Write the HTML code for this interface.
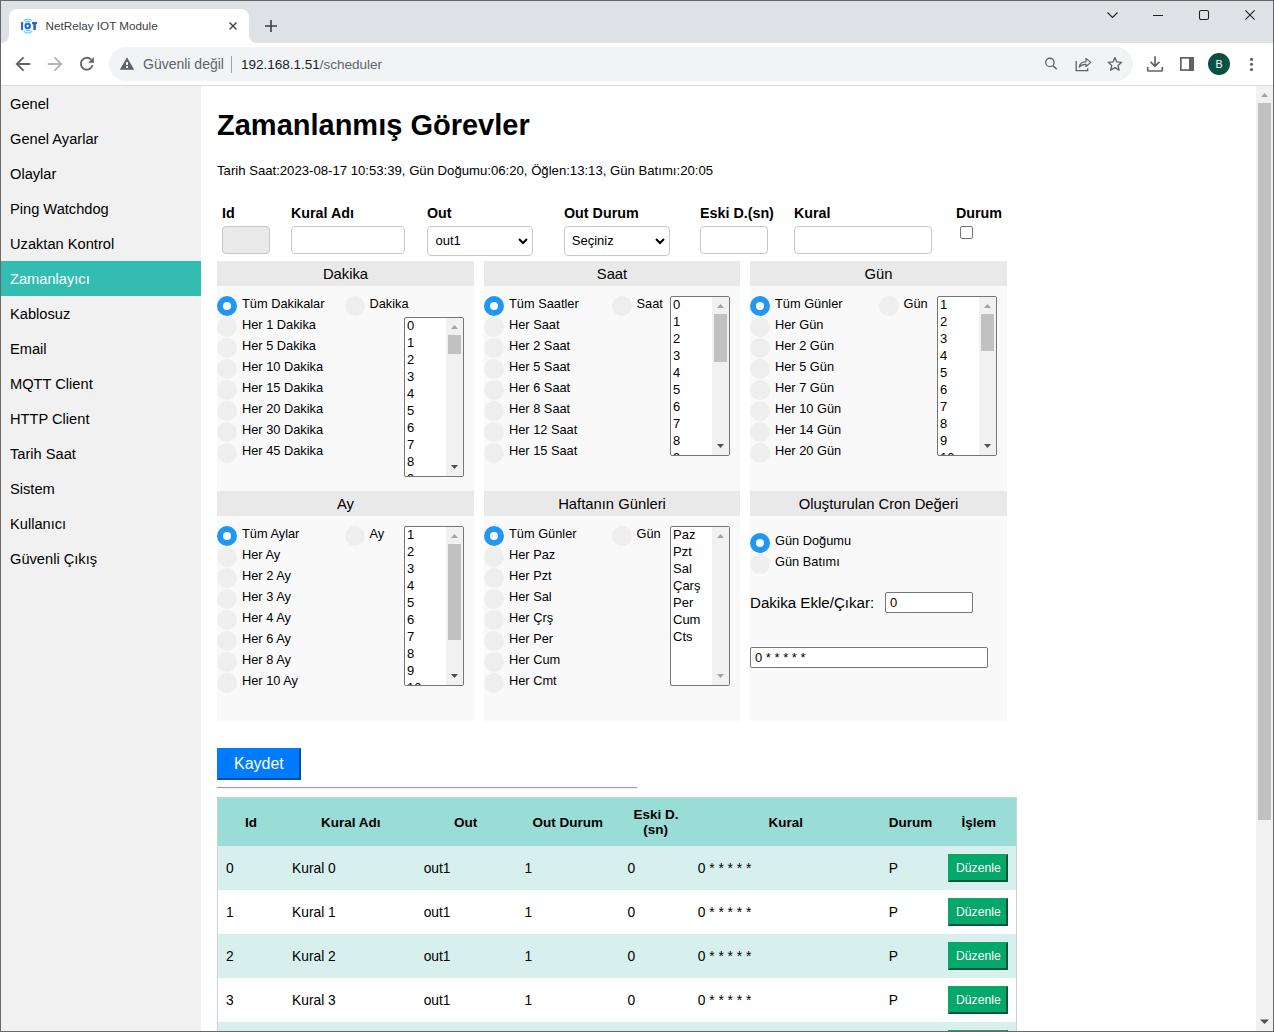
<!DOCTYPE html><html><head><meta charset="utf-8"><title>NetRelay IOT Module</title><style>
html,body{margin:0;padding:0;width:1274px;height:1032px;overflow:hidden;background:#fff;}
body{position:relative;font-family:"Liberation Sans", sans-serif;}
.t{position:absolute;white-space:nowrap;line-height:1;}
.b{position:absolute;box-sizing:border-box;}
.rad{position:absolute;width:20px;height:20px;border-radius:50%;background:#eee;}
.rad.on{background:#2196f3;}
.rad.on:after{content:"";position:absolute;left:6px;top:6px;width:8px;height:8px;border-radius:50%;background:#fff;}
svg{position:absolute;overflow:visible;}
</style></head><body>
<div class="b" style="left:0px;top:0px;width:1274px;height:43px;background:#dee1e6;"></div>
<div class="b" style="left:0px;top:43px;width:1274px;height:43px;background:#fff;"></div>
<div class="b" style="left:0px;top:85px;width:1274px;height:1px;background:#dadce0;"></div>
<div class="b" style="left:9px;top:9px;width:240px;height:34px;background:#fff;border-radius:8px 8px 0 0;"></div>
<svg style="left:1px;top:35px" width="8" height="8"><path d="M0 8 A8 8 0 0 0 8 0 L8 8 Z" fill="#fff"/></svg>
<svg style="left:249px;top:35px" width="8" height="8"><path d="M8 8 A8 8 0 0 1 0 0 L0 8 Z" fill="#fff"/></svg>
<svg style="left:20px;top:17px" width="18" height="18" viewBox="0 0 18 18"><rect x="1" y="5" width="2.1" height="7.9" rx="0.5" fill="#2563eb"/><circle cx="7.7" cy="9" r="2.2" fill="none" stroke="#2a5fe0" stroke-width="2.1"/><rect x="12" y="5" width="5" height="2.3" rx="0.5" fill="#2a5fe0"/><rect x="13.3" y="5" width="2.6" height="7.9" rx="0.5" fill="#2a5fe0"/><path d="M3.8 3.7 Q7.7 0.3 11.8 3.7 M5.2 5.1 Q7.7 3.6 10.4 5.1 M3.8 14.3 Q7.7 17.7 11.8 14.3 M5.2 12.9 Q7.7 14.4 10.4 12.9" fill="none" stroke="#38d3e3" stroke-width="1.1"/></svg>
<div class="t" style="left:45.5px;top:20.10px;font-size:11.7px;color:#3c4043;font-weight:normal;">NetRelay IOT Module</div>
<svg style="left:229px;top:22px" width="8" height="8"><path d="M0.5 0.5 L7.5 7.5 M7.5 0.5 L0.5 7.5" stroke="#3c4043" stroke-width="1.4"/></svg>
<svg style="left:265px;top:20px" width="12" height="12"><path d="M6 0 V12 M0 6 H12" stroke="#3c4043" stroke-width="1.6"/></svg>
<svg style="left:1107px;top:12px" width="11" height="7"><path d="M0.5 0.5 L5.5 5.5 L10.5 0.5" fill="none" stroke="#1f1f1f" stroke-width="1.1"/></svg>
<div class="b" style="left:1153px;top:15px;width:10px;height:1px;background:#1f1f1f;"></div>
<svg style="left:1199px;top:10px" width="10" height="10"><rect x="0.5" y="0.5" width="9" height="9" rx="1.6" fill="none" stroke="#1f1f1f" stroke-width="1.05"/></svg>
<svg style="left:1245px;top:10px" width="10" height="10"><path d="M0.4 0.4 L9.6 9.6 M9.6 0.4 L0.4 9.6" stroke="#1f1f1f" stroke-width="1.1"/></svg>
<svg style="left:15px;top:56px" width="16" height="16" viewBox="0 0 16 16"><path d="M14.5 8 H2.5 M8 1.8 L1.8 8 L8 14.2" fill="none" stroke="#5f6368" stroke-width="1.9" stroke-linecap="round"/></svg>
<svg style="left:47px;top:56px" width="16" height="16" viewBox="0 0 16 16"><path d="M1.5 8 H13.5 M8 1.8 L14.2 8 L8 14.2" fill="none" stroke="#b4b6b9" stroke-width="1.9" stroke-linecap="round"/></svg>
<svg style="left:79px;top:56px" width="16" height="16" viewBox="0 0 16 16"><path d="M13.47 9.33 A5.9 5.9 0 1 1 11.97 3.53" fill="none" stroke="#5f6368" stroke-width="1.9"/><path d="M14.9 1.1 L14.9 6.8 L9.1 6.8 Z" fill="#5f6368"/></svg>
<div class="b" style="left:109px;top:47px;width:1024px;height:34px;background:#f1f3f4;border-radius:17px;"></div>
<svg style="left:119px;top:56px" width="16" height="15" viewBox="0 0 16 15"><path d="M8 1.2 L15.2 13.8 H0.8 Z" fill="#5f6368"/><rect x="7" y="6.2" width="2" height="2.7" fill="#fff"/><rect x="7" y="10.1" width="2" height="1.9" fill="#fff"/></svg>
<div class="t" style="left:143px;top:57.15px;font-size:14px;color:#5f6368;font-weight:normal;">Güvenli değil</div>
<div class="b" style="left:231px;top:56px;width:1px;height:17px;background:#9aa0a6;"></div>
<div class="t" style="left:241px;top:57.57px;font-size:13.5px;color:#202124;font-weight:normal;">192.168.1.51<span style="color:#5f6368">/scheduler</span></div>
<svg style="left:1044px;top:57px" width="14" height="14" viewBox="0 0 14 14"><circle cx="5.9" cy="5.4" r="4.2" fill="none" stroke="#5f6368" stroke-width="1.35"/><path d="M9 8.6 L12.7 12.3" stroke="#5f6368" stroke-width="1.5"/></svg>
<svg style="left:1075px;top:56px" width="17" height="16" viewBox="0 0 17 16"><path d="M1.2 5 V14.7 H12.7 V12.3" fill="none" stroke="#5f6368" stroke-width="1.3"/><path d="M4.2 11.2 C4.6 7.6 7.6 5.6 11 5.8 V2.4 L15.8 6.4 L11 10.5 V8.3 C8 8.2 5.6 9.2 4.2 11.2 Z" fill="none" stroke="#5f6368" stroke-width="1.2" stroke-linejoin="round"/></svg>
<svg style="left:1106px;top:56px" width="17" height="16" viewBox="0 0 17 16"><path d="M8.9 1.6 L10.8 5.9 L15.6 6.3 L12 9.4 L13.1 14.2 L8.9 11.7 L4.7 14.2 L5.8 9.4 L2.2 6.3 L7 5.9 Z" fill="none" stroke="#5f6368" stroke-width="1.35" stroke-linejoin="round"/></svg>
<svg style="left:1146px;top:55px" width="18" height="17" viewBox="0 0 18 17"><path d="M9 1.2 V11.6 M4.6 6.9 L9 11.4 L13.4 6.9" fill="none" stroke="#5f6368" stroke-width="1.7"/><path d="M1.7 12 V15 Q1.7 16 2.7 16 H15.3 Q16.3 16 16.3 15 V12" fill="none" stroke="#5f6368" stroke-width="1.7"/></svg>
<svg style="left:1179px;top:56px" width="16" height="16" viewBox="0 0 16 16"><rect x="1.85" y="1.85" width="12.3" height="12.2" fill="none" stroke="#5f6368" stroke-width="1.7"/><rect x="10" y="1" width="5" height="13.9" fill="#5f6368"/></svg>
<div class="b" style="left:1208px;top:53px;width:22px;height:22px;border-radius:50%;background:#0b5142;"></div>
<div class="t" style="left:1215.6px;top:58.86px;font-size:10.8px;color:#fff;font-weight:normal;">B</div>
<svg style="left:1249px;top:57px" width="5" height="15"><circle cx="2.5" cy="2.4" r="1.55" fill="#5f6368"/><circle cx="2.5" cy="7.3" r="1.55" fill="#5f6368"/><circle cx="2.5" cy="12.6" r="1.55" fill="#5f6368"/></svg>
<div class="b" style="left:1px;top:86px;width:200px;height:946px;background:#f1f1f1;"></div>
<div class="t" style="left:10px;top:97.00px;font-size:14.65px;color:#000;font-weight:normal;">Genel</div>
<div class="t" style="left:10px;top:132.00px;font-size:14.65px;color:#000;font-weight:normal;">Genel Ayarlar</div>
<div class="t" style="left:10px;top:167.00px;font-size:14.65px;color:#000;font-weight:normal;">Olaylar</div>
<div class="t" style="left:10px;top:202.00px;font-size:14.65px;color:#000;font-weight:normal;">Ping Watchdog</div>
<div class="t" style="left:10px;top:237.00px;font-size:14.65px;color:#000;font-weight:normal;">Uzaktan Kontrol</div>
<div class="b" style="left:1px;top:261px;width:200px;height:35px;background:#33bdb2;"></div>
<div class="t" style="left:10px;top:272.00px;font-size:14.65px;color:#fff;font-weight:normal;">Zamanlayıcı</div>
<div class="t" style="left:10px;top:307.00px;font-size:14.65px;color:#000;font-weight:normal;">Kablosuz</div>
<div class="t" style="left:10px;top:342.00px;font-size:14.65px;color:#000;font-weight:normal;">Email</div>
<div class="t" style="left:10px;top:377.00px;font-size:14.65px;color:#000;font-weight:normal;">MQTT Client</div>
<div class="t" style="left:10px;top:412.00px;font-size:14.65px;color:#000;font-weight:normal;">HTTP Client</div>
<div class="t" style="left:10px;top:447.00px;font-size:14.65px;color:#000;font-weight:normal;">Tarih Saat</div>
<div class="t" style="left:10px;top:482.00px;font-size:14.65px;color:#000;font-weight:normal;">Sistem</div>
<div class="t" style="left:10px;top:517.00px;font-size:14.65px;color:#000;font-weight:normal;">Kullanıcı</div>
<div class="t" style="left:10px;top:552.00px;font-size:14.65px;color:#000;font-weight:normal;">Güvenli Çıkış</div>
<div class="b" style="left:1256px;top:86px;width:17px;height:946px;background:#f1f1f1;"></div>
<svg style="left:1261px;top:93px" width="7" height="4"><path d="M0 4 L3.5 0 L7 4 Z" fill="#a3a3a3"/></svg>
<div class="b" style="left:1258px;top:103px;width:13px;height:717px;background:#c1c1c1;"></div>
<svg style="left:1260px;top:1019px" width="9" height="6"><path d="M0 0.5 L4.5 5 L9 0.5 Z" fill="#505050"/></svg>
<div class="t" style="left:217px;top:110.75px;font-size:29px;color:#000;font-weight:bold;">Zamanlanmış Görevler</div>
<div class="t" style="left:217px;top:163.87px;font-size:13.15px;color:#000;font-weight:normal;">Tarih Saat:2023-08-17 10:53:39, Gün Doğumu:06:20, Öğlen:13:13, Gün Batımı:20:05</div>
<div class="t" style="left:222px;top:205.60px;font-size:14.3px;color:#000;font-weight:bold;">Id</div>
<div class="t" style="left:291px;top:205.60px;font-size:14.3px;color:#000;font-weight:bold;">Kural Adı</div>
<div class="t" style="left:427px;top:205.60px;font-size:14.3px;color:#000;font-weight:bold;">Out</div>
<div class="t" style="left:564px;top:205.60px;font-size:14.3px;color:#000;font-weight:bold;">Out Durum</div>
<div class="t" style="left:700px;top:205.60px;font-size:14.3px;color:#000;font-weight:bold;">Eski D.(sn)</div>
<div class="t" style="left:794px;top:205.60px;font-size:14.3px;color:#000;font-weight:bold;">Kural</div>
<div class="t" style="left:956px;top:205.60px;font-size:14.3px;color:#000;font-weight:bold;">Durum</div>
<div class="b" style="left:222px;top:226px;width:48px;height:28px;border:1px solid #c8c8c8;border-radius:4px;background:#e9e9e9;"></div>
<div class="b" style="left:291px;top:226px;width:114px;height:28px;border:1px solid #c8c8c8;border-radius:4px;background:#fff;"></div>
<div class="b" style="left:700px;top:226px;width:68px;height:28px;border:1px solid #c8c8c8;border-radius:4px;background:#fff;"></div>
<div class="b" style="left:794px;top:226px;width:138px;height:28px;border:1px solid #c8c8c8;border-radius:4px;background:#fff;"></div>
<div class="b" style="left:427px;top:226px;width:106px;height:30px;border:1px solid #c8c8c8;border-radius:4px;background:#fff;"></div>
<div class="b" style="left:564px;top:226px;width:106px;height:30px;border:1px solid #c8c8c8;border-radius:4px;background:#fff;"></div>
<div class="t" style="left:435.5px;top:233.60px;font-size:13px;color:#000;font-weight:normal;">out1</div>
<div class="t" style="left:571.8px;top:233.60px;font-size:13px;color:#000;font-weight:normal;">Seçiniz</div>
<svg style="left:518px;top:238px" width="10" height="7"><path d="M1 1 L5 5 L9 1" fill="none" stroke="#000" stroke-width="2"/></svg>
<svg style="left:655px;top:238px" width="10" height="7"><path d="M1 1 L5 5 L9 1" fill="none" stroke="#000" stroke-width="2"/></svg>
<div class="b" style="left:960px;top:226px;width:13px;height:13px;border:1px solid #767676;border-radius:2px;background:#fff;"></div>
<div class="b" style="left:217px;top:261px;width:257px;height:25px;background:#e9e9e9;"></div>
<div class="b" style="left:217px;top:286px;width:257px;height:205px;background:#f9f9f9;"></div>
<div class="t" style="left:217px;width:257px;text-align:center;top:266.67px;font-size:14.8px;">Dakika</div>
<div class="b" style="left:484px;top:261px;width:256px;height:25px;background:#e9e9e9;"></div>
<div class="b" style="left:484px;top:286px;width:256px;height:205px;background:#f9f9f9;"></div>
<div class="t" style="left:484px;width:256px;text-align:center;top:266.67px;font-size:14.8px;">Saat</div>
<div class="b" style="left:750px;top:261px;width:257px;height:25px;background:#e9e9e9;"></div>
<div class="b" style="left:750px;top:286px;width:257px;height:205px;background:#f9f9f9;"></div>
<div class="t" style="left:750px;width:257px;text-align:center;top:266.67px;font-size:14.8px;">Gün</div>
<div class="b" style="left:217px;top:491px;width:257px;height:25px;background:#e9e9e9;"></div>
<div class="b" style="left:217px;top:516px;width:257px;height:205px;background:#f9f9f9;"></div>
<div class="t" style="left:217px;width:257px;text-align:center;top:496.67px;font-size:14.8px;">Ay</div>
<div class="b" style="left:484px;top:491px;width:256px;height:25px;background:#e9e9e9;"></div>
<div class="b" style="left:484px;top:516px;width:256px;height:205px;background:#f9f9f9;"></div>
<div class="t" style="left:484px;width:256px;text-align:center;top:496.67px;font-size:14.8px;">Haftanın Günleri</div>
<div class="b" style="left:750px;top:491px;width:257px;height:25px;background:#e9e9e9;"></div>
<div class="b" style="left:750px;top:516px;width:257px;height:205px;background:#f9f9f9;"></div>
<div class="t" style="left:750px;width:257px;text-align:center;top:496.67px;font-size:14.8px;">Oluşturulan Cron Değeri</div>
<div class="rad on" style="left:217px;top:296px"></div>
<div class="t" style="left:242px;top:298.06px;font-size:12.8px;color:#000;font-weight:normal;">Tüm Dakikalar</div>
<div class="rad" style="left:217px;top:317px"></div>
<div class="t" style="left:242px;top:319.06px;font-size:12.8px;color:#000;font-weight:normal;">Her 1 Dakika</div>
<div class="rad" style="left:217px;top:338px"></div>
<div class="t" style="left:242px;top:340.06px;font-size:12.8px;color:#000;font-weight:normal;">Her 5 Dakika</div>
<div class="rad" style="left:217px;top:359px"></div>
<div class="t" style="left:242px;top:361.06px;font-size:12.8px;color:#000;font-weight:normal;">Her 10 Dakika</div>
<div class="rad" style="left:217px;top:380px"></div>
<div class="t" style="left:242px;top:382.06px;font-size:12.8px;color:#000;font-weight:normal;">Her 15 Dakika</div>
<div class="rad" style="left:217px;top:401px"></div>
<div class="t" style="left:242px;top:403.06px;font-size:12.8px;color:#000;font-weight:normal;">Her 20 Dakika</div>
<div class="rad" style="left:217px;top:422px"></div>
<div class="t" style="left:242px;top:424.06px;font-size:12.8px;color:#000;font-weight:normal;">Her 30 Dakika</div>
<div class="rad" style="left:217px;top:443px"></div>
<div class="t" style="left:242px;top:445.06px;font-size:12.8px;color:#000;font-weight:normal;">Her 45 Dakika</div>
<div class="rad" style="left:345px;top:296px"></div>
<div class="t" style="left:369.5px;top:298.06px;font-size:12.8px;color:#000;font-weight:normal;">Dakika</div>
<div class="rad on" style="left:484px;top:296px"></div>
<div class="t" style="left:509px;top:298.06px;font-size:12.8px;color:#000;font-weight:normal;">Tüm Saatler</div>
<div class="rad" style="left:484px;top:317px"></div>
<div class="t" style="left:509px;top:319.06px;font-size:12.8px;color:#000;font-weight:normal;">Her Saat</div>
<div class="rad" style="left:484px;top:338px"></div>
<div class="t" style="left:509px;top:340.06px;font-size:12.8px;color:#000;font-weight:normal;">Her 2 Saat</div>
<div class="rad" style="left:484px;top:359px"></div>
<div class="t" style="left:509px;top:361.06px;font-size:12.8px;color:#000;font-weight:normal;">Her 5 Saat</div>
<div class="rad" style="left:484px;top:380px"></div>
<div class="t" style="left:509px;top:382.06px;font-size:12.8px;color:#000;font-weight:normal;">Her 6 Saat</div>
<div class="rad" style="left:484px;top:401px"></div>
<div class="t" style="left:509px;top:403.06px;font-size:12.8px;color:#000;font-weight:normal;">Her 8 Saat</div>
<div class="rad" style="left:484px;top:422px"></div>
<div class="t" style="left:509px;top:424.06px;font-size:12.8px;color:#000;font-weight:normal;">Her 12 Saat</div>
<div class="rad" style="left:484px;top:443px"></div>
<div class="t" style="left:509px;top:445.06px;font-size:12.8px;color:#000;font-weight:normal;">Her 15 Saat</div>
<div class="rad" style="left:612px;top:296px"></div>
<div class="t" style="left:636.5px;top:298.06px;font-size:12.8px;color:#000;font-weight:normal;">Saat</div>
<div class="rad on" style="left:750px;top:296px"></div>
<div class="t" style="left:775px;top:298.06px;font-size:12.8px;color:#000;font-weight:normal;">Tüm Günler</div>
<div class="rad" style="left:750px;top:317px"></div>
<div class="t" style="left:775px;top:319.06px;font-size:12.8px;color:#000;font-weight:normal;">Her Gün</div>
<div class="rad" style="left:750px;top:338px"></div>
<div class="t" style="left:775px;top:340.06px;font-size:12.8px;color:#000;font-weight:normal;">Her 2 Gün</div>
<div class="rad" style="left:750px;top:359px"></div>
<div class="t" style="left:775px;top:361.06px;font-size:12.8px;color:#000;font-weight:normal;">Her 5 Gün</div>
<div class="rad" style="left:750px;top:380px"></div>
<div class="t" style="left:775px;top:382.06px;font-size:12.8px;color:#000;font-weight:normal;">Her 7 Gün</div>
<div class="rad" style="left:750px;top:401px"></div>
<div class="t" style="left:775px;top:403.06px;font-size:12.8px;color:#000;font-weight:normal;">Her 10 Gün</div>
<div class="rad" style="left:750px;top:422px"></div>
<div class="t" style="left:775px;top:424.06px;font-size:12.8px;color:#000;font-weight:normal;">Her 14 Gün</div>
<div class="rad" style="left:750px;top:443px"></div>
<div class="t" style="left:775px;top:445.06px;font-size:12.8px;color:#000;font-weight:normal;">Her 20 Gün</div>
<div class="rad" style="left:879px;top:296px"></div>
<div class="t" style="left:903.5px;top:298.06px;font-size:12.8px;color:#000;font-weight:normal;">Gün</div>
<div class="rad on" style="left:217px;top:526px"></div>
<div class="t" style="left:242px;top:528.06px;font-size:12.8px;color:#000;font-weight:normal;">Tüm Aylar</div>
<div class="rad" style="left:217px;top:547px"></div>
<div class="t" style="left:242px;top:549.06px;font-size:12.8px;color:#000;font-weight:normal;">Her Ay</div>
<div class="rad" style="left:217px;top:568px"></div>
<div class="t" style="left:242px;top:570.06px;font-size:12.8px;color:#000;font-weight:normal;">Her 2 Ay</div>
<div class="rad" style="left:217px;top:589px"></div>
<div class="t" style="left:242px;top:591.06px;font-size:12.8px;color:#000;font-weight:normal;">Her 3 Ay</div>
<div class="rad" style="left:217px;top:610px"></div>
<div class="t" style="left:242px;top:612.06px;font-size:12.8px;color:#000;font-weight:normal;">Her 4 Ay</div>
<div class="rad" style="left:217px;top:631px"></div>
<div class="t" style="left:242px;top:633.06px;font-size:12.8px;color:#000;font-weight:normal;">Her 6 Ay</div>
<div class="rad" style="left:217px;top:652px"></div>
<div class="t" style="left:242px;top:654.06px;font-size:12.8px;color:#000;font-weight:normal;">Her 8 Ay</div>
<div class="rad" style="left:217px;top:673px"></div>
<div class="t" style="left:242px;top:675.06px;font-size:12.8px;color:#000;font-weight:normal;">Her 10 Ay</div>
<div class="rad" style="left:345px;top:526px"></div>
<div class="t" style="left:369.5px;top:528.06px;font-size:12.8px;color:#000;font-weight:normal;">Ay</div>
<div class="rad on" style="left:484px;top:526px"></div>
<div class="t" style="left:509px;top:528.06px;font-size:12.8px;color:#000;font-weight:normal;">Tüm Günler</div>
<div class="rad" style="left:484px;top:547px"></div>
<div class="t" style="left:509px;top:549.06px;font-size:12.8px;color:#000;font-weight:normal;">Her Paz</div>
<div class="rad" style="left:484px;top:568px"></div>
<div class="t" style="left:509px;top:570.06px;font-size:12.8px;color:#000;font-weight:normal;">Her Pzt</div>
<div class="rad" style="left:484px;top:589px"></div>
<div class="t" style="left:509px;top:591.06px;font-size:12.8px;color:#000;font-weight:normal;">Her Sal</div>
<div class="rad" style="left:484px;top:610px"></div>
<div class="t" style="left:509px;top:612.06px;font-size:12.8px;color:#000;font-weight:normal;">Her Çrş</div>
<div class="rad" style="left:484px;top:631px"></div>
<div class="t" style="left:509px;top:633.06px;font-size:12.8px;color:#000;font-weight:normal;">Her Per</div>
<div class="rad" style="left:484px;top:652px"></div>
<div class="t" style="left:509px;top:654.06px;font-size:12.8px;color:#000;font-weight:normal;">Her Cum</div>
<div class="rad" style="left:484px;top:673px"></div>
<div class="t" style="left:509px;top:675.06px;font-size:12.8px;color:#000;font-weight:normal;">Her Cmt</div>
<div class="rad" style="left:612px;top:526px"></div>
<div class="t" style="left:636.5px;top:528.06px;font-size:12.8px;color:#000;font-weight:normal;">Gün</div>
<div class="rad on" style="left:750px;top:533px"></div>
<div class="t" style="left:775px;top:535.06px;font-size:12.8px;color:#000;font-weight:normal;">Gün Doğumu</div>
<div class="rad" style="left:750px;top:554px"></div>
<div class="t" style="left:775px;top:556.06px;font-size:12.8px;color:#000;font-weight:normal;">Gün Batımı</div>
<div class="b" style="left:404px;top:317px;width:60px;height:160px;border:1px solid #767676;border-radius:2px;background:#fff;overflow:hidden;">
<div class="t" style="left:2px;top:-1.20px;font-size:13px;line-height:17px;">0</div>
<div class="t" style="left:2px;top:15.80px;font-size:13px;line-height:17px;">1</div>
<div class="t" style="left:2px;top:32.80px;font-size:13px;line-height:17px;">2</div>
<div class="t" style="left:2px;top:49.80px;font-size:13px;line-height:17px;">3</div>
<div class="t" style="left:2px;top:66.80px;font-size:13px;line-height:17px;">4</div>
<div class="t" style="left:2px;top:83.80px;font-size:13px;line-height:17px;">5</div>
<div class="t" style="left:2px;top:100.80px;font-size:13px;line-height:17px;">6</div>
<div class="t" style="left:2px;top:117.80px;font-size:13px;line-height:17px;">7</div>
<div class="t" style="left:2px;top:134.80px;font-size:13px;line-height:17px;">8</div>
<div class="t" style="left:2px;top:151.80px;font-size:13px;line-height:17px;">9</div>
<div class="t" style="left:2px;top:168.80px;font-size:13px;line-height:17px;">10</div>
<div class="b" style="left:41px;top:0;width:17px;height:158px;background:#f1f1f1;"></div>
<svg style="left:46px;top:6.5px" width="7" height="4"><path d="M0 4 L3.5 0 L7 4 Z" fill="#a3a3a3"/></svg>
<svg style="left:46px;top:146.7px" width="7" height="4"><path d="M0 0 L3.5 4 L7 0 Z" fill="#505050"/></svg>
<div class="b" style="left:43px;top:17px;width:13px;height:19px;background:#c1c1c1;"></div>
</div>
<div class="b" style="left:670px;top:296px;width:60px;height:160px;border:1px solid #767676;border-radius:2px;background:#fff;overflow:hidden;">
<div class="t" style="left:2px;top:-1.20px;font-size:13px;line-height:17px;">0</div>
<div class="t" style="left:2px;top:15.80px;font-size:13px;line-height:17px;">1</div>
<div class="t" style="left:2px;top:32.80px;font-size:13px;line-height:17px;">2</div>
<div class="t" style="left:2px;top:49.80px;font-size:13px;line-height:17px;">3</div>
<div class="t" style="left:2px;top:66.80px;font-size:13px;line-height:17px;">4</div>
<div class="t" style="left:2px;top:83.80px;font-size:13px;line-height:17px;">5</div>
<div class="t" style="left:2px;top:100.80px;font-size:13px;line-height:17px;">6</div>
<div class="t" style="left:2px;top:117.80px;font-size:13px;line-height:17px;">7</div>
<div class="t" style="left:2px;top:134.80px;font-size:13px;line-height:17px;">8</div>
<div class="t" style="left:2px;top:151.80px;font-size:13px;line-height:17px;">9</div>
<div class="t" style="left:2px;top:168.80px;font-size:13px;line-height:17px;">10</div>
<div class="b" style="left:41px;top:0;width:17px;height:158px;background:#f1f1f1;"></div>
<svg style="left:46px;top:6.5px" width="7" height="4"><path d="M0 4 L3.5 0 L7 4 Z" fill="#a3a3a3"/></svg>
<svg style="left:46px;top:146.7px" width="7" height="4"><path d="M0 0 L3.5 4 L7 0 Z" fill="#505050"/></svg>
<div class="b" style="left:43px;top:17px;width:13px;height:48px;background:#c1c1c1;"></div>
</div>
<div class="b" style="left:937px;top:296px;width:60px;height:160px;border:1px solid #767676;border-radius:2px;background:#fff;overflow:hidden;">
<div class="t" style="left:2px;top:-1.20px;font-size:13px;line-height:17px;">1</div>
<div class="t" style="left:2px;top:15.80px;font-size:13px;line-height:17px;">2</div>
<div class="t" style="left:2px;top:32.80px;font-size:13px;line-height:17px;">3</div>
<div class="t" style="left:2px;top:49.80px;font-size:13px;line-height:17px;">4</div>
<div class="t" style="left:2px;top:66.80px;font-size:13px;line-height:17px;">5</div>
<div class="t" style="left:2px;top:83.80px;font-size:13px;line-height:17px;">6</div>
<div class="t" style="left:2px;top:100.80px;font-size:13px;line-height:17px;">7</div>
<div class="t" style="left:2px;top:117.80px;font-size:13px;line-height:17px;">8</div>
<div class="t" style="left:2px;top:134.80px;font-size:13px;line-height:17px;">9</div>
<div class="t" style="left:2px;top:151.80px;font-size:13px;line-height:17px;">10</div>
<div class="t" style="left:2px;top:168.80px;font-size:13px;line-height:17px;">11</div>
<div class="b" style="left:41px;top:0;width:17px;height:158px;background:#f1f1f1;"></div>
<svg style="left:46px;top:6.5px" width="7" height="4"><path d="M0 4 L3.5 0 L7 4 Z" fill="#a3a3a3"/></svg>
<svg style="left:46px;top:146.7px" width="7" height="4"><path d="M0 0 L3.5 4 L7 0 Z" fill="#505050"/></svg>
<div class="b" style="left:43px;top:17px;width:13px;height:37px;background:#c1c1c1;"></div>
</div>
<div class="b" style="left:404px;top:526px;width:60px;height:160px;border:1px solid #767676;border-radius:2px;background:#fff;overflow:hidden;">
<div class="t" style="left:2px;top:-1.20px;font-size:13px;line-height:17px;">1</div>
<div class="t" style="left:2px;top:15.80px;font-size:13px;line-height:17px;">2</div>
<div class="t" style="left:2px;top:32.80px;font-size:13px;line-height:17px;">3</div>
<div class="t" style="left:2px;top:49.80px;font-size:13px;line-height:17px;">4</div>
<div class="t" style="left:2px;top:66.80px;font-size:13px;line-height:17px;">5</div>
<div class="t" style="left:2px;top:83.80px;font-size:13px;line-height:17px;">6</div>
<div class="t" style="left:2px;top:100.80px;font-size:13px;line-height:17px;">7</div>
<div class="t" style="left:2px;top:117.80px;font-size:13px;line-height:17px;">8</div>
<div class="t" style="left:2px;top:134.80px;font-size:13px;line-height:17px;">9</div>
<div class="t" style="left:2px;top:151.80px;font-size:13px;line-height:17px;">10</div>
<div class="t" style="left:2px;top:168.80px;font-size:13px;line-height:17px;">11</div>
<div class="b" style="left:41px;top:0;width:17px;height:158px;background:#f1f1f1;"></div>
<svg style="left:46px;top:6.5px" width="7" height="4"><path d="M0 4 L3.5 0 L7 4 Z" fill="#a3a3a3"/></svg>
<svg style="left:46px;top:146.7px" width="7" height="4"><path d="M0 0 L3.5 4 L7 0 Z" fill="#505050"/></svg>
<div class="b" style="left:43px;top:17px;width:13px;height:96px;background:#c1c1c1;"></div>
</div>
<div class="b" style="left:670px;top:526px;width:60px;height:160px;border:1px solid #767676;border-radius:2px;background:#fff;overflow:hidden;">
<div class="t" style="left:2px;top:-1.20px;font-size:13px;line-height:17px;">Paz</div>
<div class="t" style="left:2px;top:15.80px;font-size:13px;line-height:17px;">Pzt</div>
<div class="t" style="left:2px;top:32.80px;font-size:13px;line-height:17px;">Sal</div>
<div class="t" style="left:2px;top:49.80px;font-size:13px;line-height:17px;">Çarş</div>
<div class="t" style="left:2px;top:66.80px;font-size:13px;line-height:17px;">Per</div>
<div class="t" style="left:2px;top:83.80px;font-size:13px;line-height:17px;">Cum</div>
<div class="t" style="left:2px;top:100.80px;font-size:13px;line-height:17px;">Cts</div>
<div class="b" style="left:41px;top:0;width:17px;height:158px;background:#f1f1f1;"></div>
<svg style="left:46px;top:6.5px" width="7" height="4"><path d="M0 4 L3.5 0 L7 4 Z" fill="#a3a3a3"/></svg>
<svg style="left:46px;top:146.7px" width="7" height="4"><path d="M0 0 L3.5 4 L7 0 Z" fill="#a3a3a3"/></svg>
</div>
<div class="t" style="left:750px;top:594.82px;font-size:15.1px;color:#000;font-weight:normal;">Dakika Ekle/Çıkar:</div>
<div class="b" style="left:885px;top:592px;width:88px;height:21px;border:1px solid #767676;border-radius:2px;background:#fff;"></div>
<div class="t" style="left:890px;top:596.00px;font-size:13px;color:#000;font-weight:normal;">0</div>
<div class="b" style="left:750px;top:647px;width:238px;height:21px;border:1px solid #767676;border-radius:2px;background:#fff;"></div>
<div class="t" style="left:755px;top:651.00px;font-size:13px;color:#000;font-weight:normal;">0 * * * * *</div>
<div class="b" style="left:217px;top:748px;width:84px;height:32px;background:#007bff;border:2px solid;border-color:#007bff #0050a8 #0050a8 #007bff;"></div>
<div class="t" style="left:234px;top:756.46px;font-size:16px;color:#fff;font-weight:normal;">Kaydet</div>
<div class="b" style="left:217px;top:787px;width:420px;height:1px;background:#9a9a9a;"></div>
<div class="b" style="left:217px;top:788px;width:420px;height:1px;background:#f4f4f4;"></div>
<div class="b" style="left:217px;top:797px;width:800px;height:235px;border:1px solid #cfcfcf;border-bottom:none;background:#fff;"></div>
<div class="b" style="left:218px;top:798px;width:798px;height:48px;background:#9addd6;"></div>
<div class="t" style="left:245px;top:815.57px;font-size:13.5px;color:#000;font-weight:bold;">Id</div>
<div class="t" style="left:321px;top:815.57px;font-size:13.5px;color:#000;font-weight:bold;">Kural Adı</div>
<div class="t" style="left:454px;top:815.57px;font-size:13.5px;color:#000;font-weight:bold;">Out</div>
<div class="t" style="left:532.5px;top:815.57px;font-size:13.5px;color:#000;font-weight:bold;">Out Durum</div>
<div class="t" style="left:768.6px;top:815.57px;font-size:13.5px;color:#000;font-weight:bold;">Kural</div>
<div class="t" style="left:888.7px;top:815.57px;font-size:13.5px;color:#000;font-weight:bold;">Durum</div>
<div class="t" style="left:961.4px;top:815.57px;font-size:13.5px;color:#000;font-weight:bold;">İşlem</div>
<div class="t" style="left:633.4px;top:808.27px;font-size:13.5px;color:#000;font-weight:bold;">Eski D.</div>
<div class="t" style="left:643.3px;top:823.17px;font-size:13.5px;color:#000;font-weight:bold;">(sn)</div>
<div class="b" style="left:218px;top:846px;width:798px;height:44px;background:#d7f0ee;"></div>
<div class="t" style="left:226px;top:862.32px;font-size:13.8px;color:#000;font-weight:normal;">0</div>
<div class="t" style="left:292px;top:862.32px;font-size:13.8px;color:#000;font-weight:normal;">Kural 0</div>
<div class="t" style="left:423.7px;top:862.32px;font-size:13.8px;color:#000;font-weight:normal;">out1</div>
<div class="t" style="left:524.6px;top:862.32px;font-size:13.8px;color:#000;font-weight:normal;">1</div>
<div class="t" style="left:627.5px;top:862.32px;font-size:13.8px;color:#000;font-weight:normal;">0</div>
<div class="t" style="left:697.7px;top:862.32px;font-size:13.8px;color:#000;font-weight:normal;">0 * * * * *</div>
<div class="t" style="left:888.7px;top:862.32px;font-size:13.8px;color:#000;font-weight:normal;">P</div>
<div class="b" style="left:948px;top:854px;width:60px;height:28px;background:#04a86b;border:2px solid;border-color:#04a86b #03583a #03583a #04a86b;"></div>
<div class="t" style="left:956px;top:862.17px;font-size:12.2px;color:#fff;font-weight:normal;">Düzenle</div>
<div class="b" style="left:218px;top:890px;width:798px;height:44px;background:#fff;"></div>
<div class="t" style="left:226px;top:906.32px;font-size:13.8px;color:#000;font-weight:normal;">1</div>
<div class="t" style="left:292px;top:906.32px;font-size:13.8px;color:#000;font-weight:normal;">Kural 1</div>
<div class="t" style="left:423.7px;top:906.32px;font-size:13.8px;color:#000;font-weight:normal;">out1</div>
<div class="t" style="left:524.6px;top:906.32px;font-size:13.8px;color:#000;font-weight:normal;">1</div>
<div class="t" style="left:627.5px;top:906.32px;font-size:13.8px;color:#000;font-weight:normal;">0</div>
<div class="t" style="left:697.7px;top:906.32px;font-size:13.8px;color:#000;font-weight:normal;">0 * * * * *</div>
<div class="t" style="left:888.7px;top:906.32px;font-size:13.8px;color:#000;font-weight:normal;">P</div>
<div class="b" style="left:948px;top:898px;width:60px;height:28px;background:#04a86b;border:2px solid;border-color:#04a86b #03583a #03583a #04a86b;"></div>
<div class="t" style="left:956px;top:906.17px;font-size:12.2px;color:#fff;font-weight:normal;">Düzenle</div>
<div class="b" style="left:218px;top:934px;width:798px;height:44px;background:#d7f0ee;"></div>
<div class="t" style="left:226px;top:950.32px;font-size:13.8px;color:#000;font-weight:normal;">2</div>
<div class="t" style="left:292px;top:950.32px;font-size:13.8px;color:#000;font-weight:normal;">Kural 2</div>
<div class="t" style="left:423.7px;top:950.32px;font-size:13.8px;color:#000;font-weight:normal;">out1</div>
<div class="t" style="left:524.6px;top:950.32px;font-size:13.8px;color:#000;font-weight:normal;">1</div>
<div class="t" style="left:627.5px;top:950.32px;font-size:13.8px;color:#000;font-weight:normal;">0</div>
<div class="t" style="left:697.7px;top:950.32px;font-size:13.8px;color:#000;font-weight:normal;">0 * * * * *</div>
<div class="t" style="left:888.7px;top:950.32px;font-size:13.8px;color:#000;font-weight:normal;">P</div>
<div class="b" style="left:948px;top:942px;width:60px;height:28px;background:#04a86b;border:2px solid;border-color:#04a86b #03583a #03583a #04a86b;"></div>
<div class="t" style="left:956px;top:950.17px;font-size:12.2px;color:#fff;font-weight:normal;">Düzenle</div>
<div class="b" style="left:218px;top:978px;width:798px;height:44px;background:#fff;"></div>
<div class="t" style="left:226px;top:994.32px;font-size:13.8px;color:#000;font-weight:normal;">3</div>
<div class="t" style="left:292px;top:994.32px;font-size:13.8px;color:#000;font-weight:normal;">Kural 3</div>
<div class="t" style="left:423.7px;top:994.32px;font-size:13.8px;color:#000;font-weight:normal;">out1</div>
<div class="t" style="left:524.6px;top:994.32px;font-size:13.8px;color:#000;font-weight:normal;">1</div>
<div class="t" style="left:627.5px;top:994.32px;font-size:13.8px;color:#000;font-weight:normal;">0</div>
<div class="t" style="left:697.7px;top:994.32px;font-size:13.8px;color:#000;font-weight:normal;">0 * * * * *</div>
<div class="t" style="left:888.7px;top:994.32px;font-size:13.8px;color:#000;font-weight:normal;">P</div>
<div class="b" style="left:948px;top:986px;width:60px;height:28px;background:#04a86b;border:2px solid;border-color:#04a86b #03583a #03583a #04a86b;"></div>
<div class="t" style="left:956px;top:994.17px;font-size:12.2px;color:#fff;font-weight:normal;">Düzenle</div>
<div class="b" style="left:218px;top:1022px;width:798px;height:44px;background:#d7f0ee;"></div>
<div class="t" style="left:226px;top:1038.32px;font-size:13.8px;color:#000;font-weight:normal;">4</div>
<div class="t" style="left:292px;top:1038.32px;font-size:13.8px;color:#000;font-weight:normal;">Kural 4</div>
<div class="t" style="left:423.7px;top:1038.32px;font-size:13.8px;color:#000;font-weight:normal;">out1</div>
<div class="t" style="left:524.6px;top:1038.32px;font-size:13.8px;color:#000;font-weight:normal;">1</div>
<div class="t" style="left:627.5px;top:1038.32px;font-size:13.8px;color:#000;font-weight:normal;">0</div>
<div class="t" style="left:697.7px;top:1038.32px;font-size:13.8px;color:#000;font-weight:normal;">0 * * * * *</div>
<div class="t" style="left:888.7px;top:1038.32px;font-size:13.8px;color:#000;font-weight:normal;">P</div>
<div class="b" style="left:948px;top:1030px;width:60px;height:28px;background:#04a86b;border:2px solid;border-color:#04a86b #03583a #03583a #04a86b;"></div>
<div class="t" style="left:956px;top:1038.17px;font-size:12.2px;color:#fff;font-weight:normal;">Düzenle</div>
<div class="b" style="left:0px;top:0px;width:1274px;height:1px;background:#686868;"></div>
<div class="b" style="left:0px;top:1031px;width:1274px;height:1px;background:#686868;"></div>
<div class="b" style="left:0px;top:0px;width:1px;height:1032px;background:#686868;"></div>
<div class="b" style="left:1273px;top:0px;width:1px;height:1032px;background:#686868;"></div>
</body></html>
